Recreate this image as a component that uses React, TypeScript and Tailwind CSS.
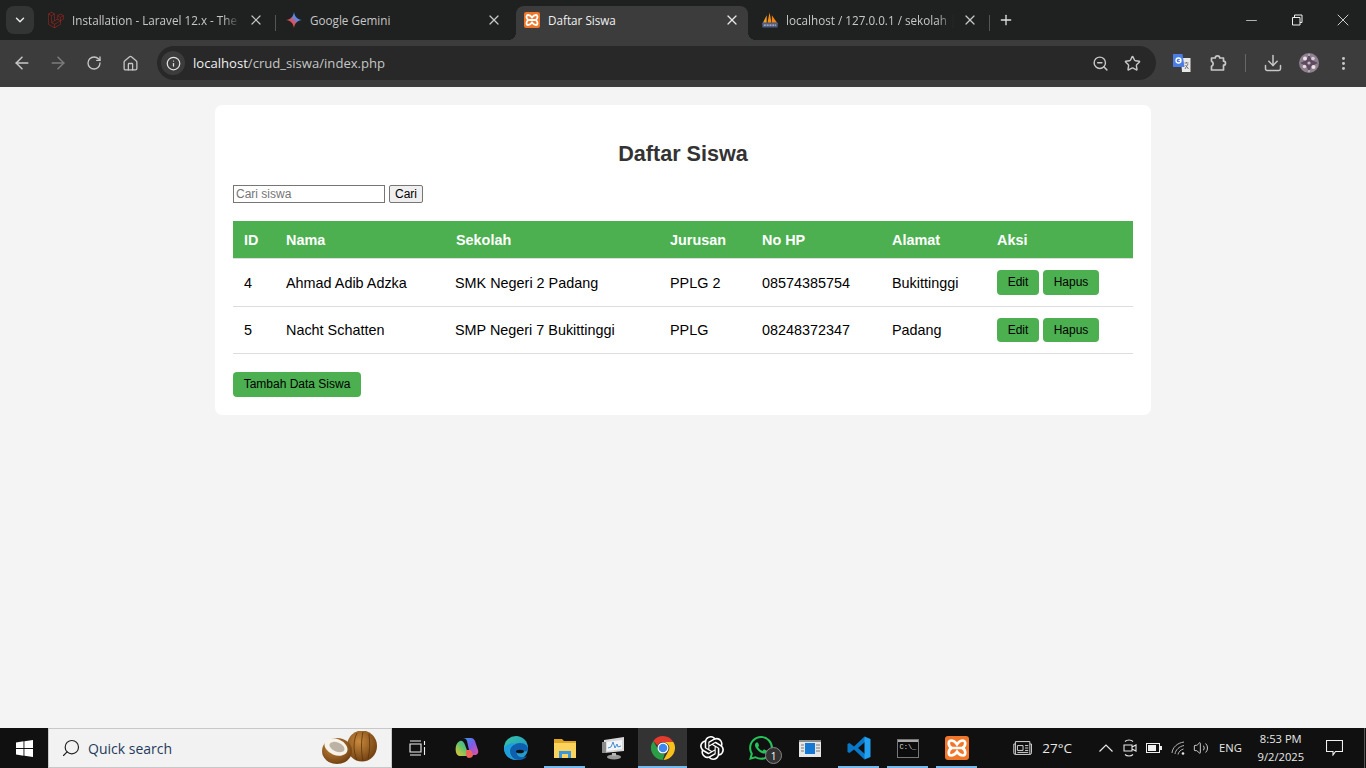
import type { ReactNode } from "react";
import {
  ArrowLeft,
  ArrowRight,
  ChevronDown,
  Download,
  EllipsisVertical,
  House,
  Info,
  Minus,
  Plus,
  RotateCw,
  Search,
  Star,
  Volume2,
  X,
  ZoomOut,
} from "lucide-react";
import { SiLaravel, SiOpenai, SiWhatsapp } from "react-icons/si";

const students = [
  { id: 4, name: "Ahmad Adib Adzka", school: "SMK Negeri 2 Padang", major: "PPLG 2", phone: "08574385754", city: "Bukittinggi" },
  { id: 5, name: "Nacht Schatten", school: "SMP Negeri 7 Bukittinggi", major: "PPLG", phone: "08248372347", city: "Padang" },
];

function XamppIcon({ size }: { size: number }) {
  return (
    <svg width={size} height={size} viewBox="0 0 16 16">
      <rect width="16" height="16" rx="2" fill="#f0762a" />
      <path
        d="M4 3C2.800 3 2.500 4 2.500 5 2.500 6.500 3.500 7.500 4.500 8 3.500 8.500 2.500 9.500 2.500 11 2.500 12 3 13 4 13 5.500 13 7 12 8 10.500 9 12 10.500 13 12 13 13 13 13.500 12 13.500 11 13.500 9.500 12.500 8.500 11.500 8 12.500 7.500 13.500 6.500 13.500 5 13.500 4 13 3 12 3 10.500 3 9 4 8 5.500 7 4 5.500 3 4 3ZM5 8H11"
        fill="none"
        stroke="#fff"
        strokeWidth="1.800"
      />
    </svg>
  );
}

function GeminiIcon() {
  return (
    <svg width="16" height="16" viewBox="0 0 16 16">
      <defs>
        <linearGradient id="gem" x1="0" y1="1" x2="1" y2="0">
          <stop offset="0" stopColor="#f4b400" />
          <stop offset="0.35" stopColor="#ea4c4c" />
          <stop offset="0.65" stopColor="#4f8df5" />
          <stop offset="1" stopColor="#38a3e8" />
        </linearGradient>
      </defs>
      <path d="M8 0C8.500 4.500 11.500 7.500 16 8 11.500 8.500 8.500 11.500 8 16 7.500 11.500 4.500 8.500 0 8 4.500 7.500 7.500 4.500 8 0Z" fill="url(#gem)" />
    </svg>
  );
}

function PmaIcon() {
  return (
    <svg width="17" height="16" viewBox="0 0 17 16">
      <path d="M1 11 5 3v8Z" fill="#f6a21a" />
      <path d="M5.800 11 8 0l2.200 11Z" fill="#f28c14" />
      <path d="M10.500 11V3l5.500 8Z" fill="#ee8413" />
      <path d="M0 11h17l-0.500 5H0.500Z" fill="#4f5d84" />
      <path d="M2 13.500h13" stroke="#b9c2da" strokeWidth="1.200" strokeDasharray="2 1" />
    </svg>
  );
}

function TranslateIcon() {
  return (
    <svg width="18" height="18" viewBox="0 0 18 18">
      <path d="M8 4h9.500v14H9Z" fill="#e8e8e8" />
      <path d="M11.500 9h4M13.500 8v1M12 15l3-5M12.500 11l3 4" stroke="#777" strokeWidth="1" fill="none" />
      <path d="M0 0h9.500l2 13H0Z" fill="#4a7ee6" />
      <circle cx="5.500" cy="6.500" r="2.500" fill="none" stroke="#fff" strokeWidth="1.300" />
      <path d="M5.500 6.500H8" stroke="#fff" strokeWidth="1.200" />
    </svg>
  );
}

function PuzzleIcon() {
  return (
    <svg width="18" height="18" viewBox="0 0 18 18" fill="none" stroke="currentColor" strokeWidth="1.700" strokeLinejoin="round">
      <path d="M2.500 4H6.300A2.200 2.200 0 0 1 10.700 4H14.500V7.200A2 2 0 0 1 14.500 11.200V16H2.500V12.200A2.700 2.700 0 0 0 2.500 7.200Z" />
    </svg>
  );
}

function Avatar() {
  return (
    <svg width="20" height="20" viewBox="0 0 20 20">
      <circle cx="10" cy="10" r="10" fill="#8f8090" />
      <path d="M10 1 12.500 7 19 10 12.500 13 10 19 7.500 13 1 10 7.500 7Z" fill="#5d4c60" />
      <circle cx="6" cy="5.500" r="2" fill="#efe2e6" />
      <circle cx="14" cy="5.500" r="1.800" fill="#d9cdd6" />
      <circle cx="5.500" cy="13.500" r="1.800" fill="#e9d8de" />
      <circle cx="14.500" cy="14" r="2" fill="#efe2e6" />
      <circle cx="10" cy="10" r="1.600" fill="#c9b3c1" />
      <circle cx="10" cy="2" r="1" fill="#c8bcc8" />
      <circle cx="10" cy="18" r="1" fill="#c8bcc8" />
    </svg>
  );
}

function Coconuts() {
  return (
    <svg width="58" height="34" viewBox="0 0 58 34">
      <defs>
        <radialGradient id="shell" cx="0.4" cy="0.35" r="0.7">
          <stop offset="0" stopColor="#c98a3c" />
          <stop offset="1" stopColor="#6d3d10" />
        </radialGradient>
      </defs>
      <ellipse cx="41" cy="15" rx="15" ry="15.500" fill="url(#shell)" />
      <path d="M36 2c-4 8-4 18 0 27M42 1c-2 9-2 19 0 29M48 3c1 8 1 17-1 25" stroke="#5c320c" strokeWidth="0.800" fill="none" />
      <ellipse cx="16" cy="20" rx="15" ry="13" fill="url(#shell)" />
      <ellipse cx="15" cy="16" rx="12" ry="8" transform="rotate(22 15 16)" fill="#f7f3ea" />
      <ellipse cx="16" cy="16" rx="8" ry="4.500" transform="rotate(22 16 16)" fill="#bdb3a4" />
    </svg>
  );
}

function CopilotIcon() {
  return (
    <svg width="24" height="24" viewBox="0 0 24 24">
      <defs>
        <linearGradient id="copA" x1="0" y1="0" x2="1" y2="1">
          <stop offset="0" stopColor="#2f9be8" />
          <stop offset="0.5" stopColor="#7f5be8" />
          <stop offset="1" stopColor="#e8509a" />
        </linearGradient>
        <linearGradient id="copB" x1="0" y1="1" x2="1" y2="0">
          <stop offset="0" stopColor="#f6c22e" />
          <stop offset="0.5" stopColor="#5fc46a" />
          <stop offset="1" stopColor="#2f9be8" />
        </linearGradient>
      </defs>
      <path d="M8 2h8c2 0 3 1 4 3l3 9c1 3-1 5-3 5h-4l-2-5-2-9C11.500 3 10 2 8 2Z" fill="url(#copA)" />
      <path d="M1 10c-1 4 0 10 4 10h9c2 0 3-1 3-2l-4-1-3-8c-1-3-3-5-5-4C3 6 2 7 1 10Z" fill="url(#copB)" />
      <path d="M11 14h5l2 5c0 2-2 3-4 3-2 0-2-1-3-3Z" fill="#f0635a" />
    </svg>
  );
}

function EdgeIcon() {
  return (
    <svg width="24" height="24" viewBox="0 0 24 24">
      <defs>
        <linearGradient id="edgeA" x1="0" y1="0" x2="1" y2="1">
          <stop offset="0" stopColor="#36c5a0" />
          <stop offset="1" stopColor="#1e8fd8" />
        </linearGradient>
      </defs>
      <circle cx="12" cy="12" r="12" fill="url(#edgeA)" />
      <path d="M24 13c0-3-3-6-8-6-6 0-10 4-10 8 0 5 4 9 9 9 4 0 7-2 8-4-3 2-9 2-10-2-1-3 3-4 6-3 3 1 5 0 5-2Z" fill="#0f5fb0" />
      <path d="M12 8c-5 1-8 6-6 11 1 2 3 4 6 5C5 24 0 18 0 12c2-3 7-6 12-4Z" fill="#1f9ce0" />
      <ellipse cx="16" cy="15.500" rx="4" ry="1.800" fill="#101010" />
    </svg>
  );
}

function FolderIcon() {
  return (
    <svg width="22" height="20" viewBox="0 0 22 20">
      <path d="M0 1h8l2 2h12v16H0Z" fill="#e0a526" />
      <path d="M0 5h22v15H0Z" fill="#fbd35c" />
      <path d="M5 13h12v7h-3v-4H8v4H5Z" fill="#3a96dd" />
    </svg>
  );
}

function MonitorIcon() {
  return (
    <svg width="24" height="24" viewBox="0 0 24 24">
      <path d="M2 4 22 1v14L2 17Z" fill="#d8d8d8" />
      <path d="M5 6 20 4v9L5 15Z" fill="#f2f5f8" />
      <path d="M6 12l3-1 2-5 2 6 2-4 1 3 3-1" stroke="#4b8fd0" strokeWidth="1" fill="none" />
      <ellipse cx="12" cy="21" rx="7" ry="2.500" fill="#9a9a9a" />
      <path d="M10 17h4v3h-4Z" fill="#b5b5b5" />
      <path d="M0 6h4v11H0Z" fill="#8a8a8a" />
    </svg>
  );
}

function ChromeIcon() {
  return (
    <svg width="24" height="24" viewBox="0 0 24 24">
      <path d="M12 0a12 12 0 0 1 10.400 6H12a6 6 0 0 0-5.500 3.500L2.300 5A12 12 0 0 1 12 0Z" fill="#e33b2e" />
      <path d="M22.400 6A12 12 0 0 1 12.500 24l4.700-8.500A6 6 0 0 0 17 8.500 6 6 0 0 0 12 6Z" fill="#f8c01b" />
      <path d="M2.300 5l4.400 7.500a6 6 0 0 0 7 5.300l-2 6.200A12 12 0 0 1 2.300 5Z" fill="#2a9d46" />
      <circle cx="12" cy="12" r="5.500" fill="#fff" />
      <circle cx="12" cy="12" r="4.300" fill="#3f86ee" />
    </svg>
  );
}

function WindowsAppIcon() {
  return (
    <svg width="22" height="17" viewBox="0 0 22 17">
      <rect width="22" height="17" fill="#e6e6e6" />
      <rect x="0" y="0" width="22" height="2" fill="#8a8a8a" />
      <rect x="6" y="3" width="10" height="11" fill="#1478d4" />
      <path d="M2 5h3M2 8h3M2 11h3M17 5h4M17 8h4M17 11h4" stroke="#777" strokeWidth="1" />
    </svg>
  );
}

function VsCodeIcon() {
  return (
    <svg width="24" height="24" viewBox="0 0 24 24">
      <path d="M17.500 0.500 7 10.500 2.500 7 0.500 8v8l2 1L7 13.500 17.500 23.500l1-5L11 12l7.500-6.500Z" fill="#0a78c8" />
      <path d="M17.500 0.500 23.500 3v18l-6 2.500Z" fill="#22a1f1" />
    </svg>
  );
}

function TerminalIcon() {
  return (
    <span className="flex h-[19px] w-[22px] flex-col border border-[#777] bg-[#0c0c0c]">
      <span className="h-[2px] w-full bg-[#aaa]" />
      <span className="mt-[2px] ml-[2px] font-['Liberation_Mono',monospace] text-[7px] leading-[7px] text-[#ddd]">C:\_</span>
    </span>
  );
}

function NewsIcon() {
  return (
    <svg width="24" height="18" viewBox="0 0 24 18" fill="none" stroke="#d9d9d9" strokeWidth="1.200">
      <path d="M3 1h18v16H3ZM3 4H1v11a2 2 0 0 0 2 2M21 4h2v11a2 2 0 0 1-2 2" />
      <path d="M5.500 6h7v6h-7ZM15 6h4M15 9h4M15 12h4M5.500 14.500h13.500" />
    </svg>
  );
}

function MeetIcon() {
  return (
    <svg width="16" height="18" viewBox="0 0 16 18" fill="none" stroke="#e6e6e6" strokeWidth="1.100">
      <path d="M3 2.500C5 0.500 9 0.500 11 2.500M3 15.500c2 2 6 2 8 0" />
      <path d="M2 6h8v6H2ZM10 8l4-2v6l-4-2" />
    </svg>
  );
}

function BatteryIcon() {
  return (
    <svg width="16" height="10" viewBox="0 0 16 10">
      <rect x="0.500" y="0.500" width="13" height="9" fill="none" stroke="#eee" />
      <rect x="2" y="2" width="8" height="6" fill="#eee" />
      <rect x="14" y="3" width="2" height="4" fill="#eee" />
    </svg>
  );
}

function WifiIcon() {
  return (
    <svg width="15" height="15" viewBox="0 0 15 15" fill="none" stroke="#b5b5b5" strokeWidth="1">
      <path d="M1 12C1.500 6.500 6 2 13 1M4 13C4.500 9 8 5.500 13 4.500M7 13.500C7.500 11 9.500 8.800 12.500 8" />
      <circle cx="12" cy="12.500" r="1.300" fill="#e8e8e8" stroke="none" />
    </svg>
  );
}

function WinLogo() {
  return (
    <svg width="17" height="17" viewBox="0 0 17 17" fill="#fff">
      <path d="M0 2.400 7.500 1.300v6.800H0ZM8.400 1.200 17 0v8.100H8.400ZM0 8.900h7.500v6.800L0 14.600ZM8.400 8.900H17V17l-8.600-1.200Z" />
    </svg>
  );
}

function Tab({
  icon,
  title,
  width,
  active,
  fade,
}: {
  icon: ReactNode;
  title: string;
  width: string;
  active?: boolean;
  fade?: boolean;
}) {
  return (
    <div className={`relative flex h-[34px] shrink-0 items-center pb-[6px] pl-2 ${width} ${active ? "rounded-t-lg bg-[#3c3c3c] text-[#f0f0f0]" : "text-[#c7c7c7]"}`}>
      <span className="flex w-4 shrink-0 justify-center">{icon}</span>
      <span
        className={`ml-2 min-w-0 flex-1 overflow-hidden whitespace-nowrap text-[11.7px] leading-4 ${fade ? "[mask-image:linear-gradient(to_right,black_90%,transparent_100%)]" : ""}`}
      >
        {title}
      </span>
      <X size={16} strokeWidth={1.800} className={`ml-2 shrink-0 ${active ? "text-[#e8e8e8]" : "text-[#c7c7c7]"}`} />
      {active && (
        <>
          <span className="absolute bottom-0 -left-2 h-2 w-2 bg-[radial-gradient(circle_at_0_0,transparent_8px,#3c3c3c_8px)]" />
          <span className="absolute bottom-0 -right-2 h-2 w-2 bg-[radial-gradient(circle_at_100%_0,transparent_8px,#3c3c3c_8px)]" />
        </>
      )}
    </div>
  );
}

function TaskItem({ children, running, active }: { children: ReactNode; running?: boolean; active?: boolean }) {
  return (
    <div className={`relative flex h-10 w-[49px] shrink-0 items-center justify-center ${active ? "bg-[#333333]" : ""}`}>
      {children}
      {running && <span className={`absolute bottom-0 h-[2px] bg-[#76b9ed] ${active ? "inset-x-0" : "inset-x-1"}`} />}
    </div>
  );
}

function GreenButton({ children, className }: { children: ReactNode; className: string }) {
  return (
    <button className={`flex items-center justify-center rounded-[4px] bg-[#4caf50] text-[12px] text-black ${className}`}>
      {children}
    </button>
  );
}

export default function App() {
  return (
    <div className="flex h-[768px] w-[1366px] flex-col overflow-hidden bg-[#f4f4f4] font-['Liberation_Sans',Arial,sans-serif]">
      {/* chrome tabs */}
      <div className="flex h-10 shrink-0 items-end bg-[#1f2020] font-['Open_Sans',sans-serif]">
        <div className="mb-[6px] ml-[6px] mr-[6px] flex h-7 w-7 items-center justify-center rounded-lg bg-[#333535] text-[#e8e8e8]">
          <ChevronDown size={14} strokeWidth={2.500} />
        </div>
        <Tab icon={<SiLaravel size={16} className="text-[#b3261e]" />} title="Installation - Laravel 12.x - The" width="w-[235px] pr-[11px]" fade />
        <span className="mb-[9px] h-4 w-px bg-[#555]" />
        <div className="w-[2px]" />
        <Tab icon={<GeminiIcon />} title="Google Gemini" width="w-[232px] pr-[8px]" />
        <div className="w-[6px]" />
        <Tab icon={<XamppIcon size={16} />} title="Daftar Siswa" width="w-[232px] pr-[8px]" active />
        <div className="w-[6px]" />
        <Tab icon={<PmaIcon />} title="localhost / 127.0.0.1 / sekolah |" width="w-[235px] pr-[11px]" fade />
        <span className="mb-[9px] h-4 w-px bg-[#555]" />
        <Plus size={16} strokeWidth={2} className="mb-[12px] ml-[8px] text-[#e0e0e0]" />
        <div className="flex-1" />
        <div className="mb-[10px] flex h-5 items-center text-[#f0f0f0]">
          <div className="flex w-[46px] justify-center"><Minus size={17} strokeWidth={1} /></div>
          <div className="flex w-[46px] justify-center">
            <svg width="12" height="12" viewBox="0 0 12 12" fill="none" stroke="currentColor" strokeWidth="1">
              <path d="M1.500 3.500H9V11H1.500ZM3.500 3.500V1H11V8.500H9" />
            </svg>
          </div>
          <div className="flex w-[46px] justify-center"><X size={20} strokeWidth={1} /></div>
        </div>
      </div>

      {/* chrome toolbar */}
      <div className="flex h-[47px] shrink-0 items-start bg-[#3c3c3c] pt-[6px] text-[#c7c7c7] font-['Open_Sans',sans-serif]">
        <div className="flex h-[34px] w-[148px] shrink-0 items-center pl-[4px]">
          <div className="flex w-9 justify-center"><ArrowLeft size={20} strokeWidth={1.800} /></div>
          <div className="flex w-9 justify-center text-[#7c7c7c]"><ArrowRight size={20} strokeWidth={1.800} /></div>
          <div className="flex w-9 justify-center"><RotateCw size={16} strokeWidth={2} /></div>
          <div className="flex w-9 justify-center"><House size={17} strokeWidth={1.800} /></div>
        </div>
        <div className="ml-[9px] flex h-[34px] w-[999px] shrink-0 items-center rounded-full bg-[#282828] pl-[4px] pr-[15px]">
          <span className="flex h-6 w-6 items-center justify-center rounded-full bg-[#3c3c3c] text-[#e3e3e3]">
            <Info size={15} strokeWidth={2} />
          </span>
          <span className="ml-2 flex-1 pt-px text-[13.1px] text-[#c4c7c5]">
            <span className="text-[#f0f0f0]">localhost</span>/crud_siswa/index.php
          </span>
          <ZoomOut size={17} strokeWidth={2} className="mr-[15px]" />
          <Star size={17} strokeWidth={2} />
        </div>
        <div className="flex h-[34px] flex-1 items-center">
          <div className="ml-[17px]"><TranslateIcon /></div>
          <div className="ml-[18px]"><PuzzleIcon /></div>
          <span className="ml-[18px] h-[18px] w-px bg-[#666]" />
          <div className="ml-[17px]"><Download size={20} strokeWidth={1.800} /></div>
          <div className="ml-[16px]"><Avatar /></div>
          <div className="ml-[16px]"><EllipsisVertical size={17} strokeWidth={2.200} /></div>
        </div>
      </div>

      {/* page */}
      <main className="flex-1 pt-[18px]">
        <div className="mx-auto w-[936px] rounded-[7px] bg-white p-[18px] text-[14.4px] text-black">
          <h2 className="mt-[19px] text-center text-[21.6px] leading-6 font-bold text-[#333]">Daftar Siswa</h2>
          <form className="mt-[19px] flex h-[18px] gap-1">
            <input
              placeholder="Cari siswa"
              className="h-[18px] w-[152px] border border-[#767676] px-[2px] text-[12px] text-black outline-none placeholder:text-[#757575]"
            />
            <button type="button" className="h-[18px] w-[34px] rounded-[2px] border border-[#767676] bg-[#efefef] text-[12px] leading-none text-black">
              Cari
            </button>
          </form>
          <table className="mt-[18px] w-[900px] table-fixed border-collapse text-left">
            <colgroup>
              <col className="w-[42px]" />
              <col className="w-[170px]" />
              <col className="w-[215px]" />
              <col className="w-[92px]" />
              <col className="w-[130px]" />
              <col className="w-[104px]" />
              <col className="w-[147px]" />
            </colgroup>
            <thead>
              <tr className="h-[37px] border-b border-[#ddd] bg-[#4caf50] text-white">
                <th className="pt-[4px] pl-[11px] font-bold">ID</th>
                <th className="pt-[4px] pl-[11px] font-bold">Nama</th>
                <th className="pt-[4px] pl-[11px] font-bold">Sekolah</th>
                <th className="pt-[4px] pl-[10px] font-bold">Jurusan</th>
                <th className="pt-[4px] pl-[10px] font-bold">No HP</th>
                <th className="pt-[4px] pl-[10px] font-bold">Alamat</th>
                <th className="pt-[4px] pl-[11px] font-bold">Aksi</th>
              </tr>
            </thead>
            <tbody>
              {students.map((s, i) => {
                const pad = i === 0 ? "pt-[4px]" : "pt-[2px]";
                return (
                  <tr key={s.id} className={`border-b border-[#ddd] ${i === 0 ? "h-[48px]" : "h-[47px]"}`}>
                    <td className={`pl-[11px] ${pad}`}>{s.id}</td>
                    <td className={`pl-[11px] ${pad}`}>{s.name}</td>
                    <td className={`pl-[10px] ${pad}`}>{s.school}</td>
                    <td className={`pl-[10px] ${pad}`}>{s.major}</td>
                    <td className={`pl-[10px] ${pad}`}>{s.phone}</td>
                    <td className={`pl-[10px] ${pad}`}>{s.city}</td>
                    <td className="pl-[11px]">
                      <div className="flex gap-1">
                        <GreenButton className={`${i === 0 ? "h-[25px]" : "h-[24px]"} w-[42px]`}>Edit</GreenButton>
                        <GreenButton className={`${i === 0 ? "h-[25px]" : "h-[24px]"} w-[56px]`}>Hapus</GreenButton>
                      </div>
                    </td>
                  </tr>
                );
              })}
            </tbody>
          </table>
          <GreenButton className="mt-[18px] h-[25px] w-[128px]">Tambah Data Siswa</GreenButton>
        </div>
      </main>

      {/* windows taskbar */}
      <footer className="flex h-10 shrink-0 items-center bg-[#101010] text-[#e8e8e8] font-['Open_Sans',sans-serif]">
        <div className="flex w-[48px] shrink-0 justify-center"><WinLogo /></div>
        <div className="mr-px flex h-10 w-[344px] shrink-0 items-center border border-[#c8c8c8] bg-[#f2f2f2] pl-[12px] pr-[12px] text-[#1f3a5c]">
          <Search size={20} strokeWidth={1.400} className="-scale-x-100 text-[#222]" />
          <span className="ml-[7px] flex-1 pt-px text-[14px]">Quick search</span>
          <Coconuts />
        </div>
        <TaskItem>
          <svg width="18" height="16" viewBox="0 0 18 16" fill="none" stroke="#f0f0f0" strokeWidth="1.100">
            <path d="M1 4h11v8H1ZM1 1h11M1 15h11M15.500 1v4M15.500 7v8" />
          </svg>
        </TaskItem>
        <TaskItem><CopilotIcon /></TaskItem>
        <TaskItem><EdgeIcon /></TaskItem>
        <TaskItem running><FolderIcon /></TaskItem>
        <TaskItem><MonitorIcon /></TaskItem>
        <TaskItem running active><ChromeIcon /></TaskItem>
        <TaskItem><SiOpenai size={24} className="text-white" /></TaskItem>
        <TaskItem>
          <SiWhatsapp size={24} className="text-[#25c35a]" />
          <span className="absolute bottom-[4px] right-[3px] flex h-[17px] w-[17px] items-center justify-center rounded-full border border-[#888] bg-[#333] text-[10px] leading-none text-white">1</span>
        </TaskItem>
        <TaskItem><WindowsAppIcon /></TaskItem>
        <TaskItem running><VsCodeIcon /></TaskItem>
        <TaskItem running><TerminalIcon /></TaskItem>
        <TaskItem running><XamppIcon size={24} /></TaskItem>
        <div className="ml-[32px] flex w-[59px] shrink-0 items-center gap-[10px]">
          <NewsIcon />
          <span className="whitespace-nowrap text-[13.500px]">27°C</span>
        </div>
        <div className="ml-[25px] flex items-center">
          <svg width="18" height="18" viewBox="0 0 18 18" fill="none" stroke="#e8e8e8" strokeWidth="1.200">
            <path d="M2.500 12.500 9 6l6.500 6.500" />
          </svg>
          <div className="ml-[7px] flex w-[16px]"><MeetIcon /></div>
          <div className="ml-[8px]"><BatteryIcon /></div>
          <div className="ml-[9px]"><WifiIcon /></div>
          <Volume2 size={16} strokeWidth={1.300} className="ml-[7px]" />
        </div>
        <span className="ml-[10px] text-[11.2px]">ENG</span>
        <div className="ml-[13px] flex w-[52px] flex-col items-center text-[11.2px] leading-[18px]">
          <span>8:53 PM</span>
          <span>9/2/2025</span>
        </div>
        <div className="ml-[19px]">
          <svg width="17" height="16" viewBox="0 0 17 16" fill="none" stroke="#f0f0f0" strokeWidth="1.100">
            <path d="M0.500 0.500h16v11H9.500L7 15v-3.500H0.500Z" />
          </svg>
        </div>
        <span className="ml-[21px] h-10 w-px bg-[#555]" />
      </footer>
    </div>
  );
}
